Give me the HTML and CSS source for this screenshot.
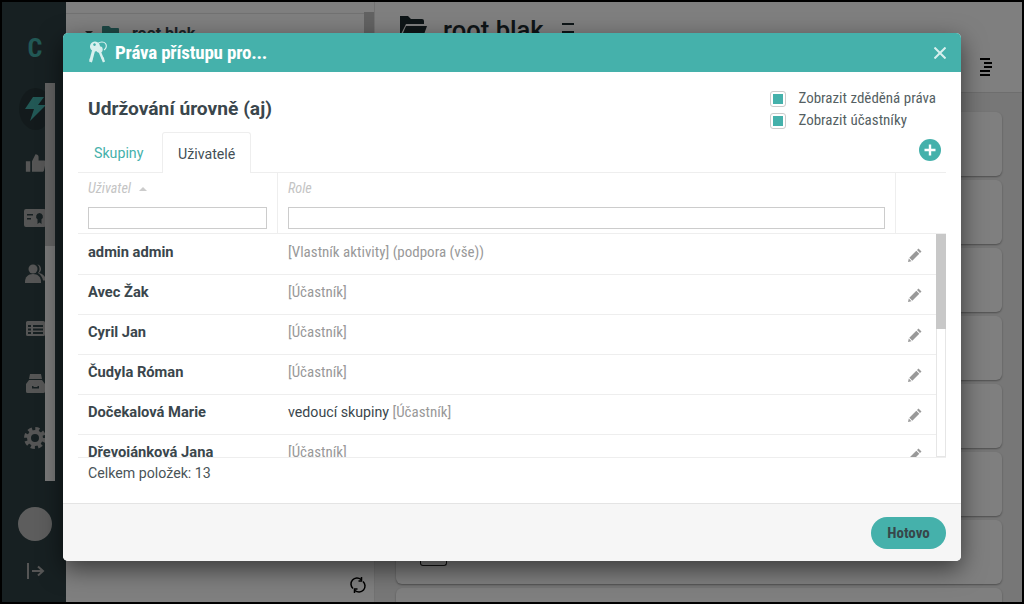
FILE: index.html
```html
<!DOCTYPE html>
<html lang="cs">
<head>
    <meta charset="UTF-8">
    <meta name="viewport" content="width=device-width, initial-scale=1.0">
    <title>Práva přístupu</title>
    <link rel="stylesheet" href="styles.css">
</head>
<body>
    <div class="screen">
        <aside class="sidebar">
            <div class="brand">C</div>
            <div class="side-icon active">
                <svg width="24" height="26" viewBox="0 0 24 26"><path d="M10 1h11l-6 8h8L7 25l4-12H2z"/></svg>
            </div>
            <div class="side-icon">
                <svg width="21" height="20" viewBox="0 0 24 22"><path d="M1 9h5v12H1zM8 9l4-8c2 0 3.500 1 3.500 3v4H22c1.200 0 2 1 1.700 2.200l-2 9.300c-.3 1-1 1.500-2 1.500H8z"/></svg>
            </div>
            <div class="side-icon">
                <svg width="22" height="18" viewBox="0 0 22 18"><path fill-rule="evenodd" d="M2 0h18a2 2 0 0 1 2 2v14a2 2 0 0 1-2 2H2a2 2 0 0 1-2-2V2a2 2 0 0 1 2-2zM3 5v1.500h6V5zM3 9v1.500h4V9zM15.500 4a3.500 3.500 0 0 0-2 6.300V15l2-1.500 2 1.500v-4.700a3.500 3.500 0 0 0-2-6.300z"/></svg>
            </div>
            <div class="side-icon">
                <svg width="21" height="19" viewBox="0 0 21 19"><circle cx="8" cy="5" r="4.500"/><path d="M0 18c0-5 3-8 8-8s8 3 8 8v1H0z"/><path d="M12 .5a4.500 4.500 0 0 1 1.500 8.500c4 .5 7.500 3.500 7.500 7.500h-3c-.5-3-2-5.500-5-7.500a6 6 0 0 0 0-8z"/></svg>
            </div>
            <div class="side-icon">
                <svg width="19" height="15" viewBox="0 0 19 15"><path fill-rule="evenodd" d="M1.500 0h16A1.500 1.500 0 0 1 19 1.500v12a1.500 1.500 0 0 1-1.500 1.500h-16A1.500 1.500 0 0 1 0 13.500v-12A1.500 1.500 0 0 1 1.500 0zM2 4v2h3V4zM7 4v2h10V4zM2 7.500v2h3v-2zM7 7.500v2h10v-2zM2 11v2h3v-2zM7 11v2h10v-2z"/></svg>
            </div>
            <div class="side-icon">
                <svg width="19" height="19" viewBox="0 0 19 19"><path fill-rule="evenodd" d="M4 0h11l1 5H3zM3 6h13l3 4v7.500a1.500 1.500 0 0 1-1.500 1.500h-16A1.500 1.500 0 0 1 0 17.500V10zM6 12v2.500h7V12h-1.500v1h-4v-1z"/></svg>
            </div>
            <div class="side-icon">
                <svg width="22" height="22" viewBox="0 0 22 22"><circle class="cog-teeth" cx="11" cy="11" r="9"/><circle class="cog-ring" cx="11" cy="11" r="6"/></svg>
            </div>
            <div class="avatar"></div>
            <div class="exit">
                <svg width="20" height="20" viewBox="0 0 20 20"><path d="M3 2v16M7 10h11M13 5.500l5 4.500-5 4.500"/></svg>
            </div>
            <div class="side-scroll"><div class="side-thumb"></div></div>
        </aside>

        <section class="tree">
            <div class="tree-head"></div>
            <div class="tree-node">
                <span class="caret"></span>
                <svg class="tree-folder" width="18" height="15" viewBox="0 0 18 15"><path d="M1 0h6l2 2h7a1 1 0 0 1 1 1v11a1 1 0 0 1-1 1H1a1 1 0 0 1-1-1V1a1 1 0 0 1 1-1z"/></svg>
                <span class="tree-label">root blak</span>
            </div>
            <div class="tree-scroll"></div>
            <svg class="refresh" width="16" height="16" viewBox="0 0 16 16"><path d="M3 11.500A6 6 0 0 1 11 2.500M13 4.500A6 6 0 0 1 5 13.500M11.500 0v4h-3M4.500 16v-4h3"/></svg>
        </section>

        <main class="main">
            <header class="main-head">
                <svg class="main-folder" width="30" height="24" viewBox="0 0 30 24"><path d="M2 0h8l3 3h11a2 2 0 0 1 2 2v3H8L2 20z"/><path d="M8 10h21l-5 14H2z"/></svg>
                <h1 class="main-title">root blak</h1>
                <span class="burger"></span>
                <svg class="align-icon" width="12" height="18" viewBox="0 0 12 18"><path d="M0 1h10M4 5h8M4 9h8M0 13h10M0 17h10"/></svg>
            </header>
            <div class="cards">
                <div class="card"></div>
                <div class="card"></div>
                <div class="card"></div>
                <div class="card"></div>
                <div class="card"></div>
                <div class="card"></div>
                <div class="card"><span class="card-box"></span></div>
                <div class="card"></div>
            </div>
        </main>

        <div class="overlay"></div>

        <div class="modal">
            <div class="modal-head">
                <svg class="keys" width="20" height="23" viewBox="0 0 20 23">
                    <path class="key-ring" d="M10 2.500c2-2 6-2 7.500 0s1 5-1.500 6.500"/>
                    <path class="key-shaft" d="M6.500 6L2.500 21"/>
                    <path class="key-shaft thin" d="M11 9l5 12"/>
                    <path d="M2 17l2.500 1-.6 2-2.400-1zM13.500 17l2-.8.8 1.800-2 .8z"/>
                    <circle cx="11.500" cy="8.500" r="3.200"/>
                    <path fill-rule="evenodd" d="M7 .5a5 5 0 1 1-.01 0zM6.500 2.300a1.300 1.300 0 1 0 .01 0z"/>
                </svg>
                <span class="modal-title">Práva přístupu pro...</span>
                <svg class="close" width="12" height="12" viewBox="0 0 12 12"><path d="M.5.500l11 11M11.500.500l-11 11"/></svg>
            </div>

            <div class="modal-body">
                <div class="top-row">
                    <h2 class="level">Udržování úrovně (aj)</h2>
                    <div class="checks">
                        <label class="check"><span class="box"><span class="box-fill"></span></span>Zobrazit zděděná práva</label>
                        <label class="check"><span class="box"><span class="box-fill"></span></span>Zobrazit účastníky</label>
                    </div>
                </div>

                <div class="tabs">
                    <a class="tab">Skupiny</a>
                    <a class="tab current">Uživatelé</a>
                    <span class="add">
                        <svg width="12" height="12" viewBox="0 0 12 12"><path d="M6 .5v11M.5 6h11"/></svg>
                    </span>
                </div>

                <div class="thead">
                    <div class="th col-user">
                        <div class="th-label">Uživatel <span class="sort"></span></div>
                        <input class="filter" type="text">
                    </div>
                    <div class="th col-role">
                        <div class="th-label">Role</div>
                        <input class="filter" type="text">
                    </div>
                    <div class="th col-act"></div>
                </div>

                <div class="list">
                    <div class="rows">
                        <div class="row">
                            <div class="name">admin admin</div>
                            <div class="role"><span class="muted">[Vlastník aktivity] (podpora (vše))</span></div>
                            <svg class="pencil" width="14" height="14" viewBox="0 0 14 14"><path d="M10.500.5l3 3L12 5 9 2zM8.300 2.700l3 3-7 7-3-3zM.8 10.500l2.700 2.700L0 14z"/></svg>
                        </div>
                        <div class="row">
                            <div class="name">Avec Žak</div>
                            <div class="role"><span class="muted">[Účastník]</span></div>
                            <svg class="pencil" width="14" height="14" viewBox="0 0 14 14"><path d="M10.500.5l3 3L12 5 9 2zM8.300 2.700l3 3-7 7-3-3zM.8 10.500l2.700 2.700L0 14z"/></svg>
                        </div>
                        <div class="row">
                            <div class="name">Cyril Jan</div>
                            <div class="role"><span class="muted">[Účastník]</span></div>
                            <svg class="pencil" width="14" height="14" viewBox="0 0 14 14"><path d="M10.500.5l3 3L12 5 9 2zM8.300 2.700l3 3-7 7-3-3zM.8 10.500l2.700 2.700L0 14z"/></svg>
                        </div>
                        <div class="row">
                            <div class="name">Čudyla Róman</div>
                            <div class="role"><span class="muted">[Účastník]</span></div>
                            <svg class="pencil" width="14" height="14" viewBox="0 0 14 14"><path d="M10.500.5l3 3L12 5 9 2zM8.300 2.700l3 3-7 7-3-3zM.8 10.500l2.700 2.700L0 14z"/></svg>
                        </div>
                        <div class="row">
                            <div class="name">Dočekalová Marie</div>
                            <div class="role">vedoucí skupiny <span class="muted">[Účastník]</span></div>
                            <svg class="pencil" width="14" height="14" viewBox="0 0 14 14"><path d="M10.500.5l3 3L12 5 9 2zM8.300 2.700l3 3-7 7-3-3zM.8 10.500l2.700 2.700L0 14z"/></svg>
                        </div>
                        <div class="row">
                            <div class="name">Dřevoiánková Jana</div>
                            <div class="role"><span class="muted">[Účastník]</span></div>
                            <svg class="pencil" width="14" height="14" viewBox="0 0 14 14"><path d="M10.500.5l3 3L12 5 9 2zM8.300 2.700l3 3-7 7-3-3zM.8 10.500l2.700 2.700L0 14z"/></svg>
                        </div>
                    </div>
                    <div class="scroll"><div class="scroll-thumb"></div></div>
                </div>

                <div class="total">Celkem položek: 13</div>
            </div>

            <div class="modal-foot">
                <button class="done" type="button">Hotovo</button>
            </div>
        </div>
    </div>
</body>
</html>
```
FILE: styles.css
```css
* {
    box-sizing: border-box;
}

html, body {
    margin: 0;
    padding: 0;
    height: 100%;
    overflow: hidden;
}

body {
    font-family: Roboto, "Liberation Sans", sans-serif;
    font-size: 14.2px;
    color: #3a464c;
}

.screen {
    position: relative;
    display: flex;
    width: 1024px;
    height: 604px;
    border: 2px solid #000;
    overflow: hidden;
    background: #eee;
}

/* sidebar */
.sidebar {
    position: relative;
    flex: 0 0 64px;
    display: flex;
    flex-direction: column;
    align-items: center;
    padding-left: 2px;
    background: #2f4144;
}

.brand {
    margin-top: 33px;
    height: 26px;
    font-size: 26px;
    font-weight: 700;
    font-stretch: condensed;
    line-height: 26px;
    color: #44b0ab;
}

.side-icon {
    display: flex;
    align-items: center;
    justify-content: center;
    width: 33px;
    height: 42px;
    margin-top: 13px;
    fill: #aaa;
}

.side-icon.active {
    margin-top: 27px;
    margin-bottom: -1px;
    border-radius: 50%;
    background: #263538;
    fill: #44b0ab;
}

.side-icon .cog-teeth {
    fill: none;
    stroke: #aaa;
    stroke-width: 4;
    stroke-dasharray: 4 3.070;
}

.side-icon .cog-ring {
    fill: none;
    stroke: #aaa;
    stroke-width: 4;
}

.avatar {
    width: 34px;
    height: 34px;
    margin-top: 48px;
    border-radius: 50%;
    background: #bbb;
}

.exit {
    margin-top: 20px;
    height: 20px;
}

.exit svg {
    fill: none;
    stroke: #aaa;
    stroke-width: 2;
}

.side-scroll {
    position: absolute;
    left: 43px;
    top: 81px;
    width: 10px;
    height: 398px;
    background: #f2f2f2;
}

.side-thumb {
    height: 163px;
    background: #c4c4c4;
}

/* tree panel */
.tree {
    position: relative;
    flex: 0 0 309px;
    border-right: 1px solid #e4e4e4;
    background: #fff;
}

.tree-head {
    height: 12px;
    border-bottom: 1px solid #e4e4e4;
}

.tree-node {
    display: flex;
    align-items: center;
    padding-left: 19px;
    height: 38px;
}

.caret {
    width: 0;
    height: 0;
    border-left: 4px solid transparent;
    border-right: 4px solid transparent;
    border-top: 4px solid #444;
}

.tree-folder {
    margin-left: 9px;
    fill: #3a8f8a;
}

.tree-label {
    margin-left: 12px;
    font-size: 16px;
    font-weight: 700;
}

.tree-scroll {
    position: absolute;
    top: 10px;
    right: 0;
    width: 10px;
    height: 60px;
    background: #c4c4c4;
}

.refresh {
    position: absolute;
    left: 284px;
    bottom: 9px;
    fill: none;
    stroke: #000;
    stroke-width: 1.5;
}

/* main */
.main {
    flex: 1;
    display: flex;
    flex-direction: column;
    min-width: 0;
    overflow: hidden;
}

.main-head {
    display: flex;
    flex: 0 0 91px;
    padding: 14px 30px 0 23px;
    border-bottom: 1px solid #ddd;
    background: #fff;
}

.main-folder {
    fill: #1c2a2e;
}

.main-title {
    margin: -6px 0 0 15px;
    font-size: 25.6px;
    font-weight: 500;
    line-height: 40px;
    color: #1c2a2e;
}

.burger {
    width: 12px;
    height: 10px;
    margin: 7px 0 0 18px;
    border-top: 2px solid #1c2a2e;
    border-bottom: 2px solid #1c2a2e;
}

.align-icon {
    margin: 42px 0 0 auto;
    stroke: #000;
    stroke-width: 2;
}

.cards {
    display: flex;
    flex-direction: column;
    gap: 4px;
    padding: 19px 20px 0 21px;
}

.card {
    flex: 0 0 64px;
    border-radius: 6px;
    background: #fff;
    box-shadow: 0 1px 2px rgba(0, 0, 0, 0.35);
}

.card-box {
    display: block;
    width: 27px;
    height: 8px;
    margin: 38px 0 0 24px;
    border: 1px solid #222;
    border-top: none;
    border-radius: 0 0 3px 3px;
}

.overlay {
    position: absolute;
    top: 0;
    left: 0;
    right: 0;
    bottom: 0;
    background: rgba(0, 0, 0, 0.5);
}

/* modal */
.modal {
    position: absolute;
    top: 31px;
    left: 61px;
    display: flex;
    flex-direction: column;
    width: 898px;
    height: 528px;
    border-radius: 5px;
    background: #fff;
    box-shadow: 0 8px 24px rgba(0, 0, 0, 0.55);
    overflow: hidden;
}

.modal-head {
    display: flex;
    align-items: center;
    flex: 0 0 39px;
    padding: 0 15px 0 25px;
    background: #45b1ab;
}

.keys {
    fill: #d8f0ee;
}

.key-ring {
    fill: none;
    stroke: #d8f0ee;
    stroke-width: 1.2;
}

.key-shaft {
    fill: none;
    stroke: #d8f0ee;
    stroke-width: 3;
}

.key-shaft.thin {
    stroke-width: 2.4;
}

.modal-title {
    margin-left: 7px;
    font-size: 19px;
    font-weight: 700;
    font-stretch: condensed;
    letter-spacing: -0.2px;
    color: #fff;
}

.close {
    margin-left: auto;
    stroke: #d8f0ee;
    stroke-width: 2;
}

.modal-body {
    flex: 1;
    padding: 0 15px;
}

.top-row {
    display: flex;
    justify-content: space-between;
    height: 60px;
}

.level {
    margin: 25px 0 0 10px;
    font-size: 19.2px;
    font-weight: 700;
    line-height: 24px;
}

.checks {
    display: flex;
    flex-direction: column;
    gap: 6px;
    padding: 19px 10px 0 0;
}

.check {
    display: flex;
    align-items: flex-start;
    height: 16px;
    font-stretch: condensed;
    font-size: 15px;
    line-height: 14px;
    color: #555f63;
}

.box {
    display: flex;
    align-items: center;
    justify-content: center;
    width: 16px;
    height: 16px;
    margin-right: 12px;
    border: 1px solid #ccc;
    border-radius: 3px;
    background: #fff;
}

.box-fill {
    width: 10px;
    height: 10px;
    background: #45b1ab;
}

.tabs {
    display: flex;
    height: 40px;
}

.tab {
    padding: 13px 15px 0;
    color: #45b1ab;
}

.tab:first-child {
    width: 84px;
    padding-left: 16px;
}

.tab.current {
    position: relative;
    height: 41px;
    width: 89px;
    border: 1px solid #eee;
    border-bottom: none;
    border-radius: 3px 3px 0 0;
    background: #fff;
    color: #444f55;
}

.add {
    display: flex;
    align-items: center;
    justify-content: center;
    width: 22px;
    height: 22px;
    margin: 7px 5px 0 auto;
    border-radius: 50%;
    background: #45b1ab;
}

.add svg {
    stroke: #fff;
    stroke-width: 2.400;
}

.thead {
    display: flex;
    height: 62px;
    border-top: 1px solid #eee;
    border-bottom: 1px solid #eee;
}

.th {
    padding: 7px 10px 0;
    border-right: 1px solid #eee;
}

.col-user {
    flex: 0 0 200px;
}

.col-role {
    flex: 1;
}

.col-act {
    flex: 0 0 50px;
    border-right: none;
}

.th-label {
    height: 27px;
    font-size: 14.2px;
    font-style: italic;
    font-stretch: condensed;
    color: #c4c4c4;
}

.sort {
    display: inline-block;
    width: 0;
    height: 0;
    margin: 0 0 2px 5px;
    border-left: 4px solid transparent;
    border-right: 4px solid transparent;
    border-bottom: 4px solid #ccc;
}

.filter {
    display: block;
    width: 100%;
    height: 22px;
    border: 1px solid #ccc;
    background: #fff;
}

.list {
    display: flex;
    height: 224px;
    border-bottom: 1px solid #eee;
}

.rows {
    flex: 1;
    padding-top: 1px;
    overflow: hidden;
}

.row {
    display: flex;
    height: 40px;
    padding-top: 8px;
    border-bottom: 1px solid #eee;
}

.name {
    flex: 0 0 210px;
    padding-left: 10px;
    font-size: 14.7px;
    font-weight: 700;
}

.role {
    flex: 1;
}

.muted {
    font-size: 15px;
    font-stretch: condensed;
    color: #999;
}

.pencil {
    margin: 5px 14px 0 0;
    fill: #999;
}

.scroll {
    flex: 0 0 10px;
    border: 1px solid #e6e6e6;
    border-top: none;
    background: #fff;
}

.scroll-thumb {
    height: 95px;
    margin: 0 -1px;
    background: #c8c8c8;
}

.total {
    padding: 7px 0 0 10px;
    color: #4a5458;
}

.modal-foot {
    display: flex;
    align-items: center;
    justify-content: flex-end;
    flex: 0 0 58px;
    padding-right: 15px;
    border-top: 1px solid #e4e4e4;
    background: #f6f6f6;
}

.done {
    width: 75px;
    height: 32px;
    border: none;
    border-radius: 16px;
    background: #45b1ab;
    font-family: Roboto, sans-serif;
    font-size: 15px;
    font-weight: 700;
    font-stretch: condensed;
    color: #37474a;
}
```
